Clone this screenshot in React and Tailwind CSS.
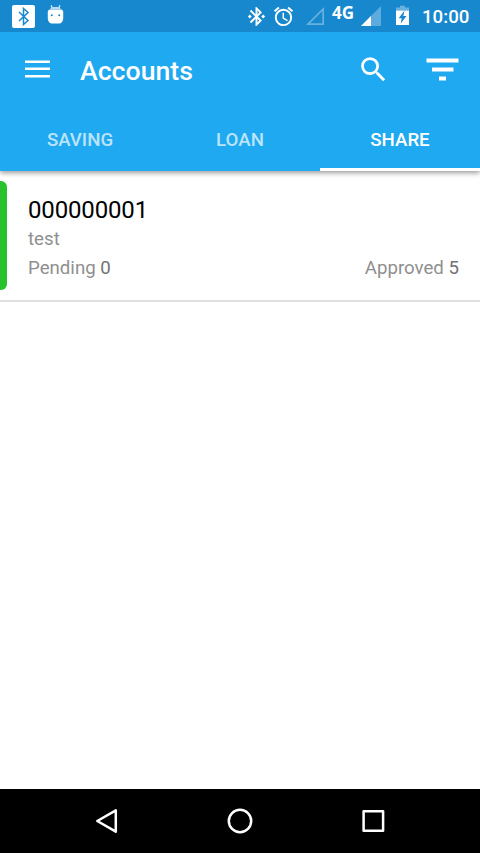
import { MdAlarm, MdBluetoothConnected, MdSearch } from "react-icons/md";

function StatusBar() {
  return (
    <div className="relative z-10 flex h-8 items-center bg-[#1888ce] pl-[12px] pr-[11px] text-white">
      <div className="flex size-[23px] items-center justify-center rounded-[2px] bg-white">
        <svg className="h-[19px] w-[12px]" viewBox="0 0 12 19" fill="none" stroke="#1888ce" strokeWidth="1.500">
          <path d="M1 5 10 13.500 5.500 17.500V1.500L10 5.500 1 14" />
        </svg>
      </div>
      <svg className="ml-[12px] h-5 w-[17px] -translate-y-[1px]" viewBox="0 0 17 20">
        <path d="M4.2 0.3 5 3M12.8 0.3 12 3" stroke="#d5e9f6" strokeWidth="1.3" fill="none" />
        <path d="M3.2 4.3C3.6 2.8 4.6 2 6 2h5c1.400 0 2.400.8 2.800 2.300z" fill="#b8dbf0" />
        <path d="M3 4.600h11c1.300 0 2.200 1 2.200 2.300v6.300c0 3-1.800 5.300-4.700 5.300h-6C2.600 18.500.8 16.200.8 13.200V6.900C.8 5.600 1.700 4.600 3 4.600z" fill="#fff" />
        <circle cx="4.800" cy="10.300" r="1" fill="#1888ce" />
        <circle cx="12.200" cy="10.300" r="1" fill="#1888ce" />
      </svg>
      <div className="ml-auto flex items-center">
        <MdBluetoothConnected size={23} />
        <MdAlarm className="ml-[4px]" size={23} />
        <svg className="ml-[10px] size-5" viewBox="0 0 20 20">
          <path d="M3 18.200 18.200 3v15.200z" fill="none" stroke="#fff" strokeOpacity=".35" strokeWidth="1.700" />
        </svg>
        <span className="ml-[7px] w-[23px] -translate-y-[4px] font-['Noto_Sans',sans-serif] text-[17px] leading-none font-bold">4G</span>
        <svg className="ml-[6px] size-5" viewBox="0 0 20 20">
          <path d="M0 20 20 0v20z" fill="#fff" fillOpacity=".3" />
          <path d="M0 20 10 10v10z" fill="#fff" />
        </svg>
        <svg className="ml-[15px] h-5 w-[13px] -translate-y-[0.500px]" viewBox="0 0 13 20">
          <path d="M4 0h5v2h4v3H0V2h4z" fill="#fff" fillOpacity=".35" />
          <path fillRule="evenodd" d="M0 5h13v14.500H0zM8.500 5 2.700 12.700h3L4.700 18l5.800-7.500H7.300z" fill="#fff" />
        </svg>
        <span className="ml-[13px] w-[47px] translate-y-[1px] text-[18.670px] leading-none font-medium">10:00</span>
      </div>
    </div>
  );
}

function Toolbar() {
  return (
    <div className="flex h-[76px] items-center pl-[25px] pr-[21px] text-white">
      <svg className="-mt-[3px] h-[18px] w-[25px]" viewBox="0 0 25 18">
        <path d="M0 .500h25v2.500H0zM0 7.500h25v2.500H0zM0 15h25v2.500H0z" fill="currentColor" />
      </svg>
      <h1 className="mt-[2px] ml-[30px] text-[26.670px] leading-8 font-medium">Accounts</h1>
      <MdSearch className="-mt-[2px] ml-auto" size={33} />
      <svg className="-mt-[2px] ml-[36px] h-[23px] w-[33px]" viewBox="0 0 33 23">
        <path d="M.500 .500h32v4H.500zM6 9.500h21.500v4H6zM13 18.500h7v4h-7z" fill="currentColor" />
      </svg>
    </div>
  );
}

function Tabs() {
  return (
    <div className="grid h-[63px] grid-cols-3 text-center text-[18.670px] leading-[55px] font-medium">
      <div className="pt-[5px] text-white/70">SAVING</div>
      <div className="pt-[5px] text-white/70">LOAN</div>
      <div className="border-b-3 border-white pt-[5px] text-white">SHARE</div>
    </div>
  );
}

function AccountRow() {
  return (
    <div className="flex h-[131px] border-b-2 border-[#e0e0e0] pt-[10px]">
      <div className="h-[109px] w-[7px] rounded-r-[6px] bg-[#27c22d]" />
      <div className="flex flex-1 flex-col pt-[15px] pr-[21px] pl-[21px] text-[18.670px] leading-[29px] text-[#8f8f8f]">
        <div className="text-[24px] leading-[29px] tracking-[-0.150px] text-black">000000001</div>
        <div>test</div>
        <div className="flex justify-between">
          <span>Pending <span className="text-[#737373]">0</span></span>
          <span>Approved <span className="text-[#737373]">5</span></span>
        </div>
      </div>
    </div>
  );
}

function NavigationBar() {
  return (
    <div className="flex h-16 items-center justify-between bg-black px-[94px]">
      <svg className="size-[26px]" viewBox="0 0 26 26" fill="none" stroke="#fff" strokeWidth="2.500" strokeLinejoin="round">
        <path d="M3.300 13 21.800 2.300v21.400z" />
      </svg>
      <svg className="size-[26px]" viewBox="0 0 26 26" fill="none" stroke="#fff" strokeWidth="2.500">
        <circle cx="13" cy="13" r="11.200" />
      </svg>
      <svg className="size-[26px]" viewBox="0 0 26 26" fill="none" stroke="#fff" strokeWidth="2.500" strokeLinejoin="round">
        <path d="M3.600 3.300h19.500v19.500H3.600z" />
      </svg>
    </div>
  );
}

export default function App() {
  return (
    <div className="flex h-[853px] w-[480px] flex-col overflow-hidden bg-white font-[Roboto,sans-serif]">
      <StatusBar />
      <header className="bg-[#1fa9f1] shadow-[0_2px_5px_rgba(0,0,0,0.4)]">
        <Toolbar />
        <Tabs />
      </header>
      <main className="flex-1">
        <AccountRow />
      </main>
      <NavigationBar />
    </div>
  );
}
